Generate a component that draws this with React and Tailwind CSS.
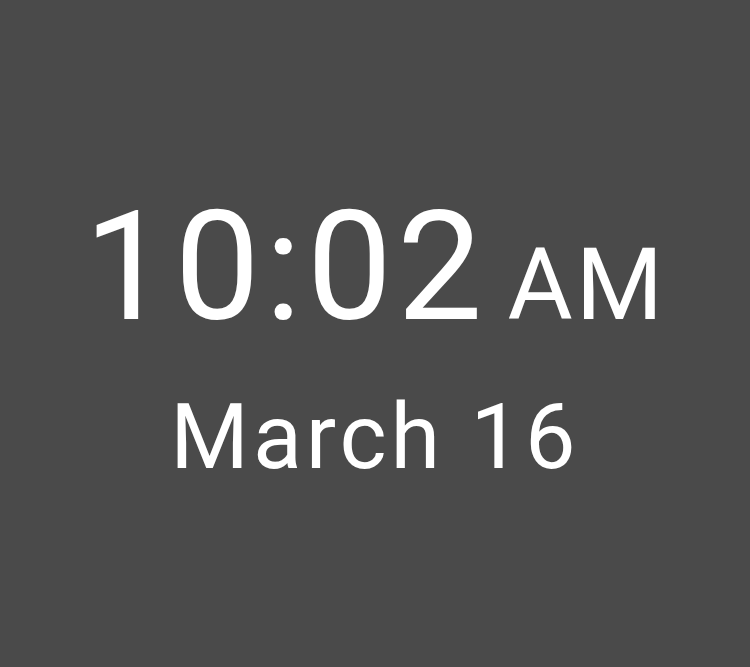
import React from "react";

const App = () => {
  return (
    <div
      className="w-[750px] h-[667px] bg-[#4a4a4a] text-white flex flex-col items-center justify-center pt-[6px]"
      style={{ fontFamily: "Roboto, 'Noto Sans', sans-serif" }}
    >
      <div className="flex items-baseline leading-none">
        <span className="text-[152px] tracking-[5px]">10:02</span>
        <span className="text-[100px] ml-[20px] tracking-[3px]">AM</span>
      </div>
      <div className="text-[90px] leading-none mt-[50px] tracking-[4px]">March 16</div>
    </div>
  );
};

export default App;
